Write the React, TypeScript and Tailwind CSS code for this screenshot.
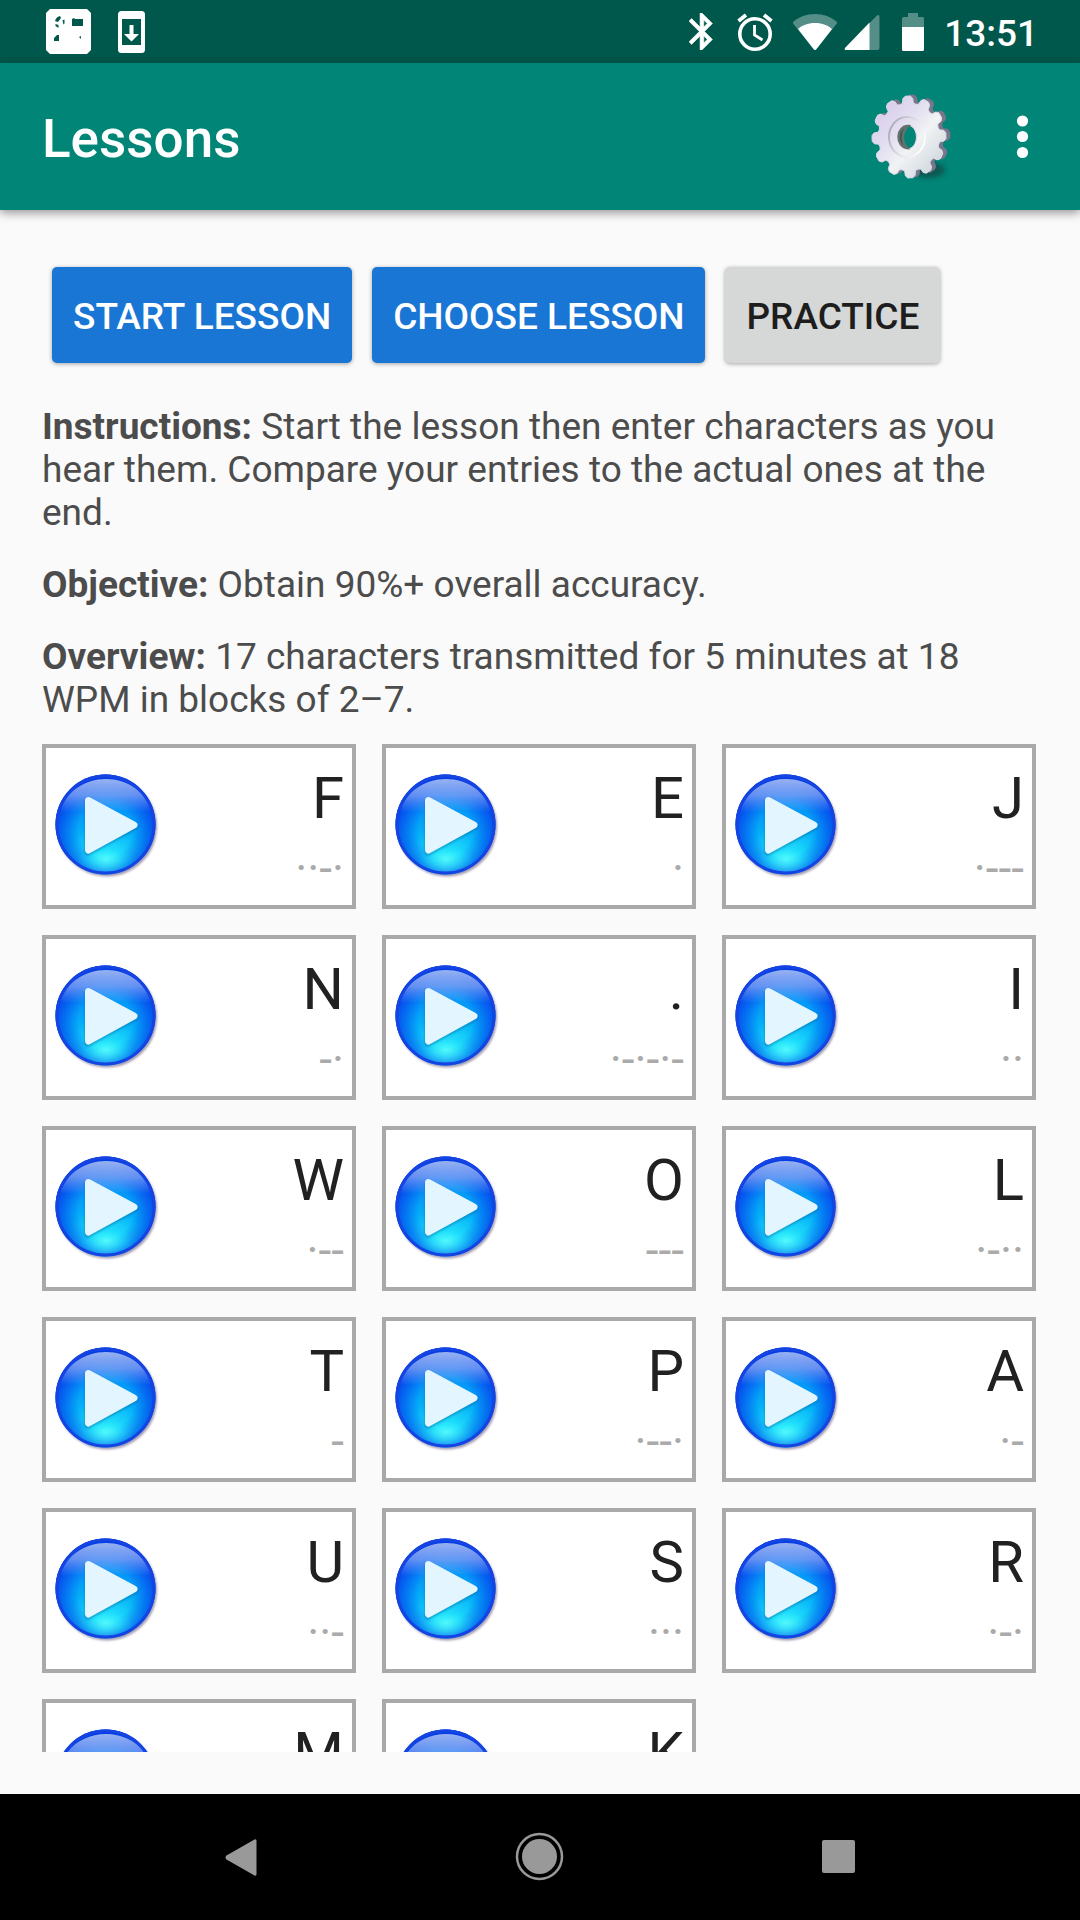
import { useState } from 'react';

interface Character {
  symbol: string;
  code: string;
}

const characters: Character[] = [
  { symbol: 'F', code: '··-·' },
  { symbol: 'E', code: '·' },
  { symbol: 'J', code: '·---' },
  { symbol: 'N', code: '-·' },
  { symbol: '.', code: '·-·-·-' },
  { symbol: 'I', code: '··' },
  { symbol: 'W', code: '·--' },
  { symbol: 'O', code: '---' },
  { symbol: 'L', code: '·-··' },
  { symbol: 'T', code: '-' },
  { symbol: 'P', code: '·--·' },
  { symbol: 'A', code: '·-' },
  { symbol: 'U', code: '··-' },
  { symbol: 'S', code: '···' },
  { symbol: 'R', code: '·-·' },
  { symbol: 'M', code: '--' },
  { symbol: 'K', code: '-·-' },
];

// outline of a 12 tooth gear, slightly taller than wide
const gearPath = (cx: number, cy: number) => {
  const points: string[] = [];
  const steps = [
    [-15, 0.82],
    [-10, 0.84],
    [-8, 0.95],
    [-4, 1],
    [4, 1],
    [8, 0.95],
    [10, 0.84],
  ];
  for (let tooth = 0; tooth < 12; tooth++) {
    steps.forEach(([offset, r]) => {
      const a = ((tooth * 30 + offset - 92) * Math.PI) / 180;
      points.push(`${(cx + Math.cos(a) * r * 37).toFixed(2)} ${(cy + Math.sin(a) * r * 41).toFixed(2)}`);
    });
  }
  return `M${points.join('L')}Z`;
};

const gearHole = 'M46.500 43a9 12 0 1 0 .01 0Z';

const GearIcon = () => (
  <svg viewBox="0 0 100 110" className="w-[100px] h-[110px]" aria-hidden="true">
    <defs>
      <linearGradient id="gear-face" x1="0.1" y1="0.1" x2="0.9" y2="0.9">
        <stop offset="0" stopColor="#d9cbea" />
        <stop offset="0.35" stopColor="#e2def0" />
        <stop offset="0.6" stopColor="#f1f3f4" />
        <stop offset="1" stopColor="#ccd6dc" />
      </linearGradient>
      <linearGradient id="gear-ring" x1="0" y1="0.2" x2="1" y2="0.7">
        <stop offset="0" stopColor="#a9a5b8" />
        <stop offset="0.5" stopColor="#dcdce4" />
        <stop offset="1" stopColor="#ffffff" />
      </linearGradient>
      <filter id="gear-blur" x="-50%" y="-50%" width="200%" height="200%">
        <feGaussianBlur stdDeviation="2.5" />
      </filter>
      <filter id="gear-soft" x="-10%" y="-10%" width="120%" height="120%">
        <feGaussianBlur stdDeviation="0.6" />
      </filter>
    </defs>
    <ellipse cx="67" cy="88" rx="17" ry="8" fill="#123b3a" opacity="0.6" filter="url(#gear-blur)" />
    <g filter="url(#gear-soft)">
      <path d={gearPath(52, 54) + gearHole} fillRule="evenodd" fill="#77768a" stroke="#77768a" strokeLinejoin="round" />
      <path d={gearPath(48, 55) + gearHole} fillRule="evenodd" fill="url(#gear-face)" stroke="#dcdbe8" strokeLinejoin="round" />
      <ellipse cx="46" cy="55" rx="18" ry="20" fill="none" stroke="url(#gear-ring)" strokeWidth="2" />
      <path d="M47 44a9 11 0 0 0 -1 22a12 14 0 0 1 1 -22Z" fill="#3f5553" stroke="#65706f" strokeWidth="2.500" />
    </g>
  </svg>
);

const PlayIcon = () => (
  <svg viewBox="0 0 106 106" className="size-[106px]" aria-hidden="true">
    <defs>
      <radialGradient id="play-ball" cx="0.5" cy="0.92" r="0.85">
        <stop offset="0" stopColor="#4dfafc" />
        <stop offset="0.22" stopColor="#1edcfb" />
        <stop offset="0.5" stopColor="#04aef8" />
        <stop offset="0.75" stopColor="#0590f8" />
        <stop offset="1" stopColor="#0a6af0" />
      </radialGradient>
      <radialGradient id="play-rim" cx="0.5" cy="0.55" r="0.54">
        <stop offset="0.5" stopColor="#0538e8" stopOpacity="0" />
        <stop offset="0.85" stopColor="#0538e8" stopOpacity="0.6" />
        <stop offset="1" stopColor="#0430e0" stopOpacity="0.9" />
      </radialGradient>
      <radialGradient id="play-glow" cx="0.5" cy="0.5" r="0.5">
        <stop offset="0" stopColor="#5bfffb" stopOpacity="0.8" />
        <stop offset="0.5" stopColor="#2cebfb" stopOpacity="0.45" />
        <stop offset="1" stopColor="#10c8fa" stopOpacity="0" />
      </radialGradient>
      <linearGradient id="play-gloss" x1="0" y1="0" x2="0" y2="1">
        <stop offset="0" stopColor="#9fb8f2" stopOpacity="0.95" />
        <stop offset="0.5" stopColor="#93b2f6" stopOpacity="0.65" />
        <stop offset="1" stopColor="#7fb0fa" stopOpacity="0" />
      </linearGradient>
      <filter id="play-shadow" x="-20%" y="-20%" width="140%" height="140%">
        <feGaussianBlur stdDeviation="1.2" />
      </filter>
    </defs>
    <circle cx="53" cy="52.500" r="50" fill="#6c5a80" opacity="0.6" filter="url(#play-shadow)" />
    <circle cx="51.500" cy="50.500" r="50" fill="url(#play-ball)" />
    <circle cx="51.500" cy="50.500" r="50" fill="url(#play-rim)" />
    <ellipse cx="52" cy="85" rx="28" ry="15" fill="url(#play-glow)" />
    <path d="M6 38C12 17 31 5 52 5s40 12 46 33C88 37 70 36 52 36S16 37 6 38Z" fill="url(#play-gloss)" />
    <circle cx="51.500" cy="50.500" r="48.500" fill="none" stroke="#1544e2" strokeWidth="3" />
    <path d="M34 28L81 52.500L34 78Z" fill="#066aa8" stroke="#066aa8" strokeWidth="7" strokeLinejoin="round" opacity="0.5" filter="url(#play-shadow)" />
    <path d="M34.500 26.500L80 51L34.500 76Z" fill="#e3f5ff" stroke="#e3f5ff" strokeWidth="7" strokeLinejoin="round" />
  </svg>
);

const StatusBar = () => (
  <div className="flex h-[63px] shrink-0 items-center bg-[#00574b] pr-[42px] pl-[46px] text-white">
    <svg viewBox="0 0 45 45" className="size-[45px]" aria-hidden="true">
      <path d="M4 0H41L45 4V41L41 45H4L0 41V4Z" fill="currentColor" />
      <g fill="#00574b">
        <path d="M9 12q1-4 5-5l1 2-3 4ZM16.500 11.500l2-1v4l-1 1ZM9.500 15l3 1v3l-3-2Z" />
        <path d="M26 10l2-1 1 1h8v7H26ZM8 31v-2l3-3h2v6H8ZM33 28l2-1v3Z" />
      </g>
    </svg>
    <svg viewBox="0 0 27 42" className="ml-[27px] h-[42px] w-[27px]" aria-hidden="true">
      <rect width="27" height="42" rx="3.500" fill="currentColor" />
      <path d="M4 8H23V34H4Z" fill="#00574b" />
      <path d="M11.500 14h4v9H21L13.500 30.500L6 23h5.500Z" fill="currentColor" />
    </svg>

    <svg viewBox="5 2 13 20" className="ml-auto h-[37px] w-6" fill="currentColor" aria-hidden="true">
      <path d="M17.710 7.710L12 2h-1v7.590L6.410 5 5 6.410 10.590 12 5 17.590 6.410 19 11 14.410V22h1l5.710-5.710-4.300-4.290 4.300-4.290zM13 5.830l1.880 1.880L13 9.590V5.830zm1.880 10.460L13 18.170v-3.760l1.880 1.880z" stroke="currentColor" strokeWidth="0.3" />
    </svg>
    <svg viewBox="0 0 36 38" className="ml-6 h-[38px] w-9" fill="none" stroke="currentColor" aria-hidden="true">
      <circle cx="18" cy="21" r="15.200" strokeWidth="3.600" />
      <path d="M17.500 12v10l8 5" strokeWidth="2.800" />
      <path d="M1.500 8L9 2M34.500 8L27 2" strokeWidth="3.800" />
    </svg>
    <svg viewBox="0 0 44 36" className="ml-5 h-9 w-11" fill="currentColor" aria-hidden="true">
      <path d="M22 0C13 0 6 3 .5 7.500Q-.5 9 .5 10L20.500 35Q22 37 23.500 35L43.500 10Q44.500 9 43.500 7.500C38 3 31 0 22 0Z" opacity="0.33" />
      <path d="M22 9C14.500 9 9 11.500 5 15L20.500 35Q22 37 23.500 35L39 15C35 11.500 29.500 9 22 9Z" />
    </svg>
    <svg viewBox="0 0 36 36" className="ml-[7px] size-9" fill="currentColor" aria-hidden="true">
      <path d="M33 1.500Q35.500 0 35.500 3V34Q35.500 36 33.500 36H2Q-.5 36 1.500 33.500Z" opacity="0.33" />
      <path d="M25.500 8.500V36H2Q-.5 36 1.500 33.500Z" />
    </svg>
    <svg viewBox="0 0 22 38" className="ml-[22px] h-[38px] w-[22px]" fill="currentColor" aria-hidden="true">
      <path d="M6 0h10v4h4.500q1.500 0 1.500 1.500V14H0V5.500Q0 4 1.500 4H6Z" opacity="0.33" />
      <path d="M0 14H22V36.500Q22 38 20.500 38H1.500Q0 38 0 36.500Z" />
    </svg>
    <time className="ml-5 pt-[3px] text-[37px] leading-[43px] font-medium">13:51</time>
  </div>
);

const NavigationBar = () => (
  <nav className="flex h-[126px] shrink-0 bg-black px-[92px] text-[#999]" aria-label="System">
    <button type="button" aria-label="Back" className="flex flex-1 items-center justify-center">
      <svg viewBox="0 0 52 52" className="size-[52px]" fill="currentColor" aria-hidden="true">
        <path d="M39.500 8.500Q41.500 7.500 41.500 10V43Q41.500 45.500 39.500 44.500L11.500 28.500Q9.500 26.500 11.500 24.500Z" />
      </svg>
    </button>
    <button type="button" aria-label="Home" className="flex flex-1 items-center justify-center">
      <svg viewBox="0 0 52 52" className="size-[52px]" aria-hidden="true">
        <circle cx="25.500" cy="25.500" r="22.500" fill="none" stroke="currentColor" strokeWidth="2.500" />
        <circle cx="25.500" cy="25.500" r="17.500" fill="currentColor" />
      </svg>
    </button>
    <button type="button" aria-label="Recent apps" className="flex flex-1 items-center justify-center">
      <svg viewBox="0 0 52 52" className="size-[52px]" fill="currentColor" aria-hidden="true">
        <rect x="9" y="9" width="33" height="33" rx="2" />
      </svg>
    </button>
  </nav>
);

const CharacterCard = ({ symbol, code, onPlay }: Character & { onPlay: () => void }) => (
  <li className="flex h-[165px] items-center justify-between border-4 border-[#a9a9a9] bg-white px-2">
    <button type="button" aria-label={`Play ${symbol}`} onClick={onPlay}>
      <PlayIcon />
    </button>
    <div className="flex flex-col items-end gap-[9px] pt-[5px]">
      <span className="text-[58px] leading-[68px] text-[#212121]">{symbol}</span>
      <span className="text-[46px] leading-[54px] text-[#aaa]">{code}</span>
    </div>
  </li>
);

const App = () => {
  const [, setPlaying] = useState<string | null>(null);
  const buttonClass = 'h-24 rounded-[5px] px-[21px] pt-[2px] text-[37px] leading-[43px] font-medium uppercase shadow-[0_1px_4px_rgba(0,0,0,0.35)]';

  return (
    <div className="flex h-screen flex-col bg-[#fafafa] font-['Roboto',sans-serif]">
      <StatusBar />
      <header className="z-10 flex h-[147px] shrink-0 items-center bg-[#008577] pr-[37px] pl-[42px] text-white shadow-[0_3px_9px_rgba(0,0,0,0.4)]">
        <h1 className="pt-1 text-[53px] leading-[62px] font-medium">Lessons</h1>
        <button type="button" aria-label="Settings" className="ml-auto">
          <GearIcon />
        </button>
        <button type="button" aria-label="More options" className="ml-[42px]">
          <svg viewBox="0 0 40 60" className="h-[60px] w-10" fill="currentColor" aria-hidden="true">
            <circle cx="19.500" cy="14" r="5.600" />
            <circle cx="19.500" cy="29.500" r="5.600" />
            <circle cx="19.500" cy="45.500" r="5.600" />
          </svg>
        </button>
      </header>

      <main className="flex min-h-0 flex-1 flex-col px-[42px] pt-[57px] pb-[42px]">
        <div className="flex gap-5 px-[10px]">
          <button type="button" className={`${buttonClass} bg-[#1976d5] text-white`}>Start lesson</button>
          <button type="button" className={`${buttonClass} bg-[#1976d5] text-white`}>Choose lesson</button>
          <button type="button" className={`${buttonClass} bg-[#d6d7d7] text-[#1d1d1d]`}>Practice</button>
        </div>

        <div className="mt-[42px] flex flex-col gap-[29px] text-[37px] leading-[43px] text-[#4c4c4c]">
          <p>
            <b>Instructions:</b> Start the lesson then enter characters as you hear them. Compare your entries to the actual ones at the end.
          </p>
          <p>
            <b>Objective:</b> Obtain 90%+ overall accuracy.
          </p>
          <p>
            <b>Overview:</b> 17 characters transmitted for 5 minutes at 18 WPM in blocks of 2–7.
          </p>
        </div>

        <ul className="mt-[23px] grid min-h-0 flex-1 grid-cols-3 content-start gap-[26px] overflow-hidden pr-[2px]">
          {characters.map((c) => (
            <CharacterCard key={c.symbol} {...c} onPlay={() => setPlaying(c.symbol)} />
          ))}
        </ul>
      </main>

      <NavigationBar />
    </div>
  );
};

export default App;
